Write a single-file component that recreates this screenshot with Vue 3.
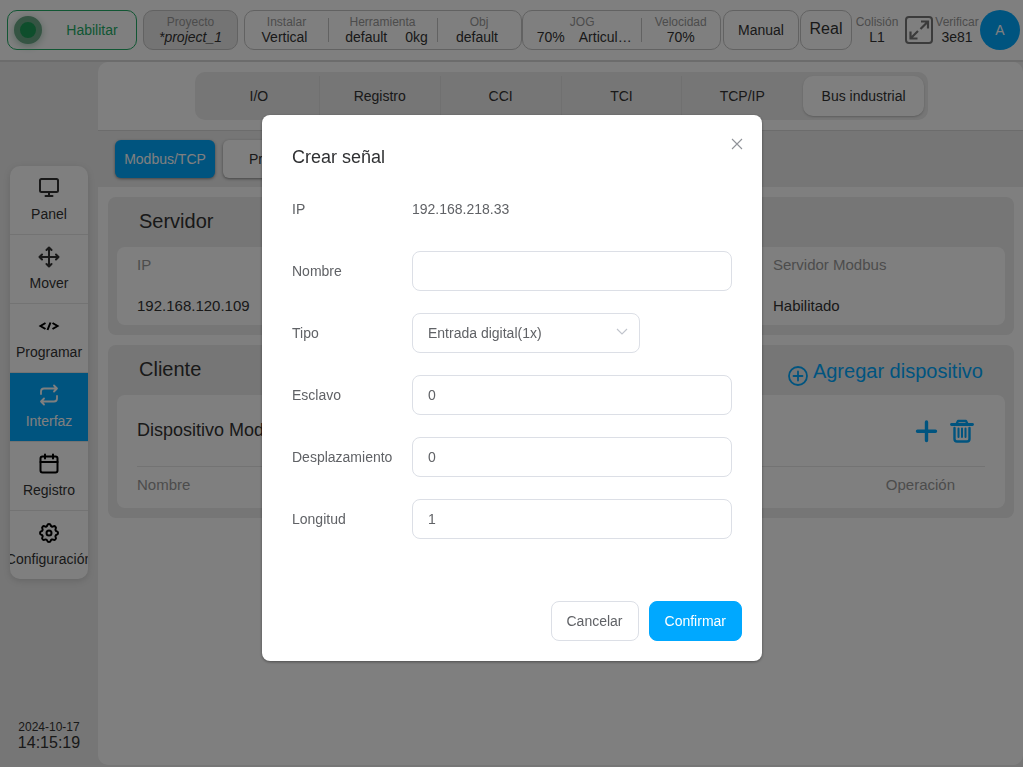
<script setup>
import { ref } from 'vue'

const navItems = [
  { id: 'panel', label: 'Panel' },
  { id: 'mover', label: 'Mover' },
  { id: 'programar', label: 'Programar' },
  { id: 'interfaz', label: 'Interfaz' },
  { id: 'registro', label: 'Registro' },
  { id: 'config', label: 'Configuración' },
]
const activeNav = ref('interfaz')

const tabs = ['I/O', 'Registro', 'CCI', 'TCI', 'TCP/IP', 'Bus industrial']
const activeTab = ref('Bus industrial')

const form = ref({ nombre: '', tipo: 'Entrada digital(1x)', esclavo: '0', desplazamiento: '0', longitud: '1' })
</script>

<template>
  <div class="app">
    <header class="topbar">
      <button class="box enable" type="button"><span class="lamp"></span><span class="enable-text">Habilitar</span></button>
      <button class="box project stat" type="button"><small>Proyecto</small><em>*project_1</em></button>
      <div class="box group group-tool">
        <div class="stat cell"><small>Instalar</small><span class="mount">Vertical</span></div>
        <div class="stat cell"><small>Herramienta</small><span class="pair"><span>default</span><span>0kg</span></span></div>
        <div class="stat cell"><small>Obj</small><span class="object">default</span></div>
      </div>
      <div class="box group group-jog">
        <div class="stat cell"><small>JOG</small><span class="pair jog"><span>70%</span><span>Articul…</span></span></div>
        <div class="stat cell"><small>Velocidad</small><span>70%</span></div>
      </div>
      <button class="box mode" type="button">Manual</button>
      <button class="box real" type="button">Real</button>
      <div class="stat collision"><small>Colisión</small><span>L1</span></div>
      <button class="expand" type="button" aria-label="Pantalla completa">
        <svg viewBox="0 0 28 28" width="28" height="28" fill="none" stroke="#777" stroke-width="2">
          <rect x="1" y="1" width="26" height="26" rx="3" />
          <path stroke-width="2.200" d="M16 5.500h7v7M22.500 6l-7 7M5.500 15.500v7h7M6 22l7-7" />
        </svg>
      </button>
      <div class="stat verify"><small>Verificar</small><span>3e81</span></div>
      <button class="avatar" type="button">A</button>
    </header>

    <div class="body">
      <aside class="side">
        <nav class="nav">
          <button
            v-for="item in navItems"
            :key="item.id"
            type="button"
            class="nav-item"
            :class="{ active: item.id === activeNav }"
            @click="activeNav = item.id"
          >
            <svg viewBox="0 0 24 24" width="24" height="24" fill="none" stroke="currentColor" stroke-width="2" stroke-linecap="round" stroke-linejoin="round">
              <g v-if="item.id === 'panel'"><rect x="3" y="3" width="18" height="13" rx="1.500" /><path d="M12 16v4M8.500 20h7" /></g>
              <path v-else-if="item.id === 'mover'" d="M12 3v18M3 12h18M9.500 5 12 2.500 14.500 5M9.500 19l2.500 2.500 2.500-2.500M5 9.500 2.500 12 5 14.500M19 9.500l2.500 2.500-2.500 2.500" />
              <path v-else-if="item.id === 'programar'" stroke="#000" stroke-width="2" stroke-linecap="butt" stroke-linejoin="miter" d="M8.500 9l-5 3 5 3M15.500 9l5 3-5 3M13.500 8.500l-3 7.500" />
              <path v-else-if="item.id === 'interfaz'" stroke-width="1.800" d="M17 2.500l3 3-3 3M4 11V8.500a3 3 0 0 1 3-3h13M7 15.500l-3 3 3 3M20 13v2.500a3 3 0 0 1-3 3H4" />
              <g v-else-if="item.id === 'registro'" stroke="#000"><rect x="3.500" y="4.500" width="17" height="16" rx="2" /><path d="M3.500 10h17M8 2.500v4M16 2.500v4" /></g>
              <g v-else stroke="#000">
                <circle cx="12" cy="12" r="2.500" />
                <path d="M10.300 4.300c.4-1.700 3-1.700 3.400 0a1.700 1.700 0 0 0 2.600 1.100c1.500-.9 3.300.8 2.400 2.400a1.700 1.700 0 0 0 1 2.500c1.800.4 1.800 3 0 3.400a1.700 1.700 0 0 0-1 2.600c.9 1.500-.9 3.300-2.400 2.400a1.700 1.700 0 0 0-2.600 1c-.4 1.800-3 1.800-3.400 0a1.700 1.700 0 0 0-2.500-1c-1.600.9-3.300-.9-2.400-2.400a1.700 1.700 0 0 0-1.100-2.600c-1.700-.4-1.700-3 0-3.400a1.700 1.700 0 0 0 1.100-2.500c-.9-1.600.8-3.300 2.400-2.400a1.700 1.700 0 0 0 2.500-1.100z" />
              </g>
            </svg>
            <span>{{ item.label }}</span>
          </button>
        </nav>
        <div class="clock"><span class="date">2024-10-17</span><span class="time">14:15:19</span></div>
      </aside>

      <main class="main">
        <div class="tabs-bar">
          <div class="tabs">
            <button
              v-for="tab in tabs"
              :key="tab"
              type="button"
              class="tab"
              :class="{ active: tab === activeTab }"
              @click="activeTab = tab"
            >{{ tab }}</button>
          </div>
        </div>
        <div class="protocols">
          <button class="protocol active" type="button">Modbus/TCP</button>
          <button class="protocol" type="button">Profinet</button>
        </div>
        <div class="sections">
          <section class="card">
            <div class="card-head"><h2>Servidor</h2></div>
            <div class="panel">
              <table class="server">
                <thead><tr><th class="wide">IP</th><th>Servidor Modbus</th></tr></thead>
                <tbody><tr><td>192.168.120.109</td><td>Habilitado</td></tr></tbody>
              </table>
            </div>
          </section>
          <section class="card">
            <div class="card-head">
              <h2>Cliente</h2>
              <button class="add" type="button">
                <svg viewBox="0 0 20 20" width="20" height="20" fill="none" stroke="currentColor" stroke-width="1.800" stroke-linecap="round"><circle cx="10" cy="10" r="9" /><path d="M10 5.500v9M5.500 10h9" /></svg>
                <span>Agregar dispositivo</span>
              </button>
            </div>
            <div class="panel">
              <div class="device">
                <h3>Dispositivo Modbus</h3>
                <button class="tool" type="button" aria-label="Agregar señal">
                  <svg viewBox="0 0 24 24" width="24" height="24" fill="none" stroke="currentColor" stroke-width="3.400" stroke-linecap="round"><path d="M12.500 3v18.500M3.500 12.200h18" /></svg>
                </button>
                <button class="tool" type="button" aria-label="Eliminar dispositivo">
                  <svg viewBox="0 0 24 24" width="24" height="24" fill="none" stroke="currentColor" stroke-width="2.400" stroke-linecap="round" stroke-linejoin="round"><path stroke-width="2.800" d="M1.500 5.500h21" /><path d="M6.500 5l1.500-3h8l1.500 3M4.500 9v11a2.500 2.500 0 0 0 2.500 2.500h10a2.500 2.500 0 0 0 2.500-2.500V9" /><path stroke-width="2" d="M8.500 9.500v8.500M12 9.500v8.500M15.500 9.500v8.500" /></svg>
                </button>
              </div>
              <table class="signals"><thead><tr><th>Nombre</th><th class="op">Operación</th></tr></thead></table>
            </div>
          </section>
        </div>
      </main>
    </div>

    <div class="overlay">
      <form class="dialog" role="dialog" aria-labelledby="dialog-title" @submit.prevent>
        <div class="dialog-head">
          <h1 id="dialog-title">Crear señal</h1>
          <button class="close" type="button" aria-label="Cerrar">
            <svg viewBox="0 0 12 12" width="12" height="12" fill="none" stroke="#909399" stroke-width="1.100"><path d="M1 1l10 10M11 1L1 11" /></svg>
          </button>
        </div>
        <div class="row"><span class="label">IP</span><output>192.168.218.33</output></div>
        <div class="row"><label class="label" for="nombre">Nombre</label><input id="nombre" v-model="form.nombre" type="text" /></div>
        <div class="row">
          <label class="label" for="tipo">Tipo</label>
          <div class="select">
            <select id="tipo" v-model="form.tipo"><option>Entrada digital(1x)</option></select>
            <svg viewBox="0 0 12 8" width="12" height="8" fill="none" stroke="#c0c4cc" stroke-width="1.100"><path d="M1 1l5 5 5-5" /></svg>
          </div>
        </div>
        <div class="row"><label class="label" for="esclavo">Esclavo</label><input id="esclavo" v-model="form.esclavo" type="text" inputmode="numeric" /></div>
        <div class="row"><label class="label" for="desplazamiento">Desplazamiento</label><input id="desplazamiento" v-model="form.desplazamiento" type="text" inputmode="numeric" /></div>
        <div class="row"><label class="label" for="longitud">Longitud</label><input id="longitud" v-model="form.longitud" type="text" inputmode="numeric" /></div>
        <div class="actions">
          <button class="btn" type="button">Cancelar</button>
          <button class="btn primary" type="submit">Confirmar</button>
        </div>
      </form>
    </div>
  </div>
</template>

<style>
body { margin: 0; }
</style>

<style scoped>
* { box-sizing: border-box; }
.app {
  display: flex;
  flex-direction: column;
  min-height: 100vh;
  background: #ececec;
  color: #333;
  font: 14px/20px "Liberation Sans", Arial, sans-serif;
}
button { padding: 0; border: 0; background: none; color: inherit; font: inherit; cursor: pointer; }
svg { display: block; flex: none; }
h1, h2, h3 { margin: 0; font-weight: 400; }

.topbar {
  display: flex;
  align-items: center;
  height: 62px;
  padding: 0 3px 0 7px;
  border-bottom: 2px solid #d8d8d8;
  background: #fff;
}
.box { flex: none; height: 40px; border: 1px solid #c4c4c4; border-radius: 10px; }
.stat { display: flex; flex-direction: column; align-items: center; justify-content: center; line-height: 16px; }
.stat small { color: #999; font-size: 12px; line-height: 14px; }
.enable { display: flex; align-items: center; width: 130px; margin-right: 6px; padding: 0 6px; border-color: #22ac66; color: #22ac66; }
.lamp { width: 28px; height: 28px; border: 6px solid #6aa886; border-radius: 50%; background: #1c9c58; box-shadow: 0 2px 8px #a9cbb9; }
.enable-text { flex: 1; padding-left: 12px; }
.project { width: 95px; margin-right: 6px; background: #e8e8e8; }
.group { display: grid; align-items: center; }
.group-tool { flex: 1 1 278px; grid-template-columns: 83fr 109fr 84fr; }
.group-jog { flex: 1 1 199px; grid-template-columns: 119fr 79fr; margin-right: 2px; }
.cell { position: relative; height: 38px; }
.cell + .cell::before { content: ""; position: absolute; left: 0; top: 7px; bottom: 7px; width: 1px; background: #c4c4c4; }
.mount { padding-right: 4px; }
.object { padding-right: 4px; }
.pair { display: flex; gap: 18px; padding-left: 8px; }
.jog { gap: 14px; padding-left: 4px; }
.mode { width: 76px; margin-right: 1px; }
.real { width: 52px; margin-right: 4px; padding-bottom: 2px; font-size: 16px; }
.collision { width: 42px; margin-right: 7px; }
.expand { margin-right: 3px; }
.verify { width: 42px; margin-right: 2px; }
.avatar { width: 40px; height: 40px; border-radius: 50%; background: #00a8ff; color: #fff; }

.body { display: flex; flex: 1; padding-bottom: 2px; }
.side { display: flex; flex-direction: column; flex: none; width: 98px; padding: 104px 10px 13px; }
.nav { overflow: hidden; border-radius: 10px; background: #fff; box-shadow: 0 2px 6px #ccc; }
.nav-item {
  display: flex;
  flex-direction: column;
  align-items: center;
  gap: 4px;
  width: 100%;
  height: 69px;
  padding-top: 10px;
  border-bottom: 1px solid #e6e6e6;
}
.nav-item:last-child { height: 68px; border-bottom: 0; }
.nav-item.active { background: #00a8ff; color: #fff; }
.clock { display: flex; flex-direction: column; align-items: center; margin-top: auto; }
.date { font-size: 12px; line-height: 14px; }
.time { font-size: 16px; line-height: 18px; }

.main { flex: 1; min-width: 0; overflow: hidden; border-radius: 10px; background: #fff; }
.tabs-bar { padding: 10px 10px 10px 12px; border-bottom: 1px solid #d8d8d8; }
.tabs { display: grid; grid-template-columns: repeat(6, 1fr); max-width: 733px; height: 48px; margin: 0 auto; padding: 4px; border-radius: 10px; background: #ececec; }
.tab { border-right: 1px solid #e0e0e0; }
.tab:nth-last-child(2) { border-right-color: transparent; }
.tab.active { border-right: 0; border-radius: 10px; background: #fff; box-shadow: 0 1px 2px #bbb; }
.protocols { display: flex; gap: 8px; padding: 9px 17px; background: #ececec; }
.protocol { width: 100px; height: 38px; border-radius: 6px; background: #fff; box-shadow: 0 1px 3px #888; }
.protocol.active { background: #00a8ff; color: #fff; }
.sections { display: flex; flex-direction: column; gap: 10px; padding: 10px 9px 10px 10px; }
.card { padding: 0 9px 10px; border-radius: 8px; background: #ececec; }
.card-head { display: flex; align-items: center; justify-content: space-between; height: 50px; padding: 0 22px 2px; }
h2 { font-size: 20px; line-height: 24px; }
.add { display: flex; align-items: center; gap: 5px; padding-top: 4px; color: #00a8ff; font-size: 20px; line-height: 24px; }
.add svg { align-self: flex-end; margin-bottom: -3px; }
.panel { padding: 0 20px; border-radius: 8px; background: #fff; }
table { width: 100%; border-collapse: collapse; table-layout: fixed; font-size: 15px; text-align: left; }
th, td { padding: 0; font-weight: 400; }
th { color: #999; }
.wide { width: 75%; }
.server th { height: 36px; }
.server td { height: 42px; padding-top: 4px; }
.device { display: flex; align-items: center; gap: 12px; height: 72px; padding-right: 11px; border-bottom: 1px solid #e6e6e6; }
h3 { flex: 1; padding-bottom: 2px; font-size: 18px; line-height: 22px; }
.tool { color: #00a8ff; }
.signals th { height: 41px; padding-bottom: 5px; }
.signals .op { padding-right: 30px; text-align: right; }

.overlay { position: fixed; inset: 0; z-index: 10; overflow: auto; padding-left: 1px; background: rgba(0, 0, 0, 0.5); }
.dialog {
  display: flex;
  flex-direction: column;
  gap: 22px;
  width: 500px;
  max-width: 100%;
  margin: 15vh auto 50px;
  padding: 30px 30px 20px;
  border-radius: 8px;
  background: #fff;
  box-shadow: 0 1px 3px rgba(0, 0, 0, 0.4);
  color: #606266;
}
.dialog-head { display: flex; justify-content: space-between; height: 22px; }
.dialog-head h1 { color: #303133; font-size: 18px; line-height: 24px; }
.close { align-self: flex-start; width: 20px; height: 20px; margin: -11px -15px 0 0; padding: 4px; }
.row { display: flex; align-items: center; height: 40px; }
.label { flex: none; width: 120px; }
input, select {
  width: 100%;
  height: 40px;
  padding: 0 15px;
  border: 1px solid #dcdfe6;
  border-radius: 8px;
  outline: none;
  background: #fff;
  color: #606266;
  font: inherit;
}
select { appearance: none; }
.select { position: relative; width: 228px; }
.select svg { position: absolute; top: 15px; right: 12px; pointer-events: none; }
.actions { display: flex; justify-content: flex-end; gap: 10px; margin: 40px -10px 0 0; }
.btn { height: 40px; padding: 0 15px; border: 1px solid #dcdfe6; border-radius: 8px; }
.btn.primary { border-color: #00a8ff; background: #00a8ff; color: #fff; }
</style>
